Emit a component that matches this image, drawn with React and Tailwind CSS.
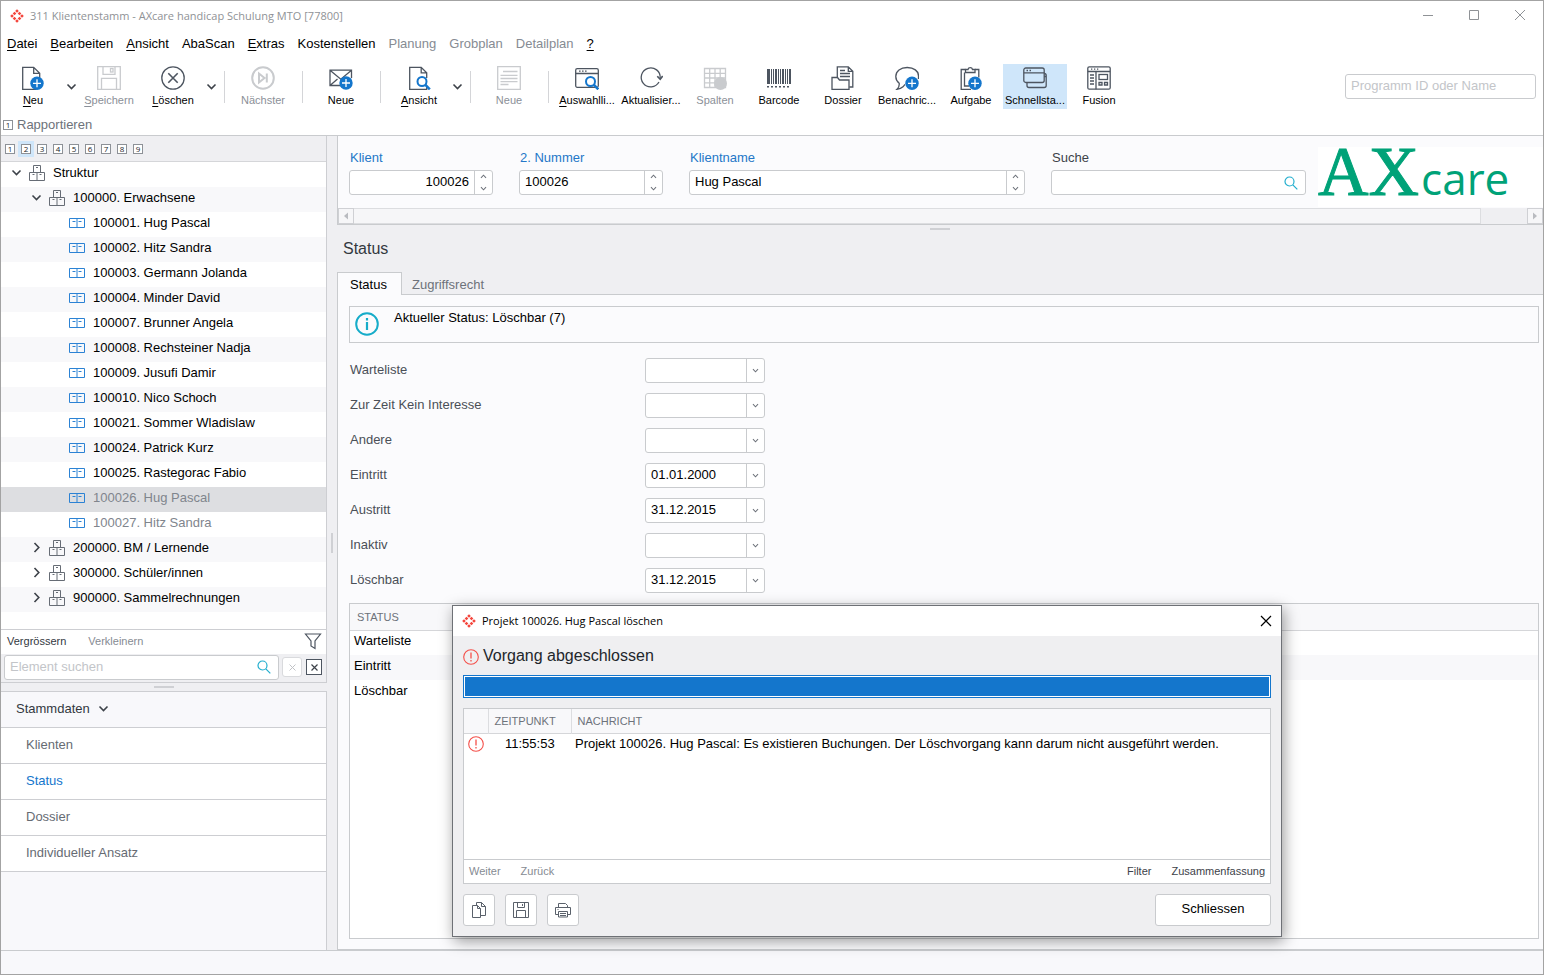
import React from 'react';

const SANS = 'font-["Liberation_Sans",Arial,sans-serif]';
const TITLE = 'font-["Open_Sans","Noto_Sans",sans-serif]';

function Svg({ size = 24, children, className = '', sw = 1.3 }) {
  return (
    <svg
      width={size}
      height={size}
      viewBox={`0 0 ${size} ${size}`}
      fill="none"
      stroke="currentColor"
      strokeWidth={sw}
      className={`shrink-0 ${className}`}
      aria-hidden="true"
    >
      {children}
    </svg>
  );
}

function BrandMark() {
  const dots = [[7, 2], [4.5, 4.5], [9.5, 4.5], [2, 7], [12, 7], [4.5, 9.5], [9.5, 9.5], [7, 12]];
  return (
    <Svg size={14} className="text-[#f4453c]">
      {dots.map(([x, y]) => (
        <rect key={`${x}-${y}`} x={x - 1.3} y={y - 1.3} width="2.6" height="2.6" transform={`rotate(45 ${x} ${y})`} fill="currentColor" stroke="none" />
      ))}
    </Svg>
  );
}

const Plus = ({ x, y, r = 6.7 }) => (
  <g stroke="none">
    <circle cx={x} cy={y} r={r} fill="#1476cc" />
    <path d={`M${x - 4} ${y}h8M${x} ${y - 4}v8`} stroke="#fff" strokeWidth="1.3" />
  </g>
);

const Lens = ({ x, y }) => (
  <g stroke="#1476cc">
    <circle cx={x} cy={y} r="4.5" strokeWidth="2" fill="#fff" />
    <path d={`M${x + 3.2} ${y + 3.2}l4.6 4.6`} strokeWidth="2.6" />
  </g>
);

const Disk = () => (
  <>
    <path d="M.7.7h22.6v22.6H.7zM6 .7v7.6h12V.7M4.5 23.3v-11h15v11" />
    <rect x="13.5" y="2.5" width="2.5" height="3.5" />
  </>
);

const icons = {
  page: (
    <>
      <path d="M15.5 23.3H1.7V1.3h11l6 6V12M12.7 1.3v6h6" />
      <Plus x={16} y={17.3} />
    </>
  ),
  disk: <Disk />,
  cross: (
    <>
      <circle cx="12" cy="12" r="11.2" />
      <path d="M7.3 7.3l9.4 9.4M16.7 7.3l-9.4 9.4" strokeWidth="1.6" />
    </>
  ),
  next: (
    <>
      <circle cx="12" cy="12" r="10.8" strokeWidth="2" />
      <path d="M8 7.5v9l5.5-4.5zM15.8 7.5v9" strokeWidth="2" />
    </>
  ),
  mail: (
    <>
      <path d="M12 19.5H1V4.2h21.5V12M1 4.2l10.8 9 10.7-9M1 19.5l7.500-6.500" />
      <Plus x={17} y={17} />
    </>
  ),
  view: (
    <>
      <path d="M14 23.3H2.7V1.3h11.5l5.5 5.5V12M14.2 1.3v5.5h5.5M19.7 20v3.3H13" />
      <Lens x={15} y={15.5} />
    </>
  ),
  note: <path d="M.7.7h22.6v22.6H.7zM6 5.500h14.500M3.500 9.300h17M3.500 12.500h17M3.500 15.700h17M3.500 18.500h8" />,
  windowLens: (
    <>
      <rect x=".7" y="2.7" width="22.6" height="18.6" rx="1.5" />
      <path d="M.7 7.5h22.6M4 5.2h1.6M7 5.2h1.6M10 5.2h1.6" />
      <Lens x={15.5} y={15.5} />
    </>
  ),
  refresh: (
    <>
      <path d="M20 16a9.500 9.500 0 1 1 1.200-4" />
      <path d="M18.300 10.300l2.900 3 2.500-3.300" strokeWidth="1.600" />
    </>
  ),
  columns: (
    <>
      <path d="M1.5 2.5h21v19h-21zM1.5 7.3h21M1.5 12h21M1.5 16.8h21M6.7 2.5v19M12 2.5v19M17.2 2.5v19" />
      <circle cx="17.5" cy="17.5" r="6.500" fill="currentColor" stroke="none" />
    </>
  ),
  barcode: (
    <g fill="currentColor" stroke="none">
      <path d="M0 3h3v15H0zM4 3h1v15H4zM6 3h1v15H6zM8 3h2v15H8zM11 3h1v15h-1zM13 3h1v15h-1zM15 3h2v15h-2zM18 3h1v15h-1zM20 3h1v15h-1zM22 3h2v15h-2z" />
      <path d="M0 20h2v1.4H0zM4 20h2v1.4H4zM8 20h2v1.4H8zM12 20h2v1.4h-2zM16 20h2v1.4h-2zM20 20h2v1.4h-2z" />
    </g>
  ),
  dossier: (
    <>
      <path d="M6.300 11.500V.8h11l4.500 4.500v15.700h-3.500M17.300.8v4.500h4.500M9 4.500h5M9 7.500h10M9 10.500h10" />
      <path d="M1 23.300V11.500h5.500l2 2.500h9.500v9.300z" />
    </>
  ),
  chat: (
    <>
      <path d="M10 18.300l-2 2.500c-1.500 1.500-3.500 2.300-6 2.500 1.700-1.500 2.500-3.500 2.200-6C2 15.500.8 13 .8 10.500.8 5 5.500 1.500 12.200 1.500S23.500 5 23.500 10v3" />
      <Plus x={17} y={17.300} />
    </>
  ),
  clipboard: (
    <>
      <path d="M6.500 3.500H2.200v19.800H12M16 3.500h3.800v8" />
      <path d="M6.500 6.500h9.500V3.500h-2.500a2.300 2.300 0 0 0-4.500 0H6.500zM5.500 6.500v13.500H10" />
      <Plus x={16} y={17.300} />
    </>
  ),
  windows: (
    <>
      <rect x=".8" y="2" width="20.400" height="14.500" rx="2" />
      <path d="M.8 6.800h20.400M3.500 4.500h1.500M6.500 4.500H8" />
      <path d="M21.200 7.500c1.300 0 2 .8 2 2v10c0 1.300-.7 2-2 2H6c-1.300 0-2-.7-2-2v-3M21.200 10.500h2" />
    </>
  ),
  fusion: (
    <>
      <rect x=".8" y=".8" width="22.400" height="22.400" rx="1.500" />
      <path d="M.8 5.500h22.400M9 5.500v17.700M4 3.200h1.300M7 3.200h1.300M10 3.200h1.300" />
      <path d="M3 9h4M3 12h4M3 15h4M3 18h4" strokeWidth="1.600" />
      <rect x="12" y="8.500" width="8.500" height="5" />
      <path d="M12 16.500h3v2.500h-3zM17.500 16.500h3v2.500h-3z" />
    </>
  ),
};

function Chevron({ dir = 'down', small }) {
  const d = dir === 'down' ? 'M1.500 3.500L5.500 7.500l4-4' : dir === 'up' ? 'M1.500 7.500l4-4 4 4' : 'M3.500 1l4.300 4.500L3.500 10';
  return (
    <svg width={small ? 7 : 11} height={small ? 7 : 11} viewBox="0 0 11 11" fill="none" stroke={small ? '#6d727a' : '#3d4249'} strokeWidth="1.6" className="shrink-0" aria-hidden="true">
      <path d={d} />
    </svg>
  );
}

function Accel({ text, on }) {
  if (!on) return text;
  return (
    <>
      <span className="underline underline-offset-2">{text[0]}</span>
      {text.slice(1)}
    </>
  );
}

function Tool({ icon, label, disabled, active, accel }) {
  return (
    <button
      type="button"
      disabled={disabled}
      className={`flex h-[45px] w-16 shrink-0 flex-col items-center gap-[3px] pt-0.5 text-[11px] leading-[14px] ${active ? 'bg-[#cfe6fa]' : ''}`}
    >
      <Svg className={disabled ? 'text-[#c9cbce]' : 'text-[#4d5560]'}>{icons[icon]}</Svg>
      <span className={`whitespace-nowrap ${disabled ? 'text-[#8b9098]' : 'text-black'}`}>
        <Accel text={label} on={accel} />
      </span>
    </button>
  );
}

const ToolMenu = ({ label }) => (
  <button type="button" aria-label={label} className="flex h-[45px] w-3 shrink-0 items-center justify-center">
    <Chevron />
  </button>
);

const Separator = () => (
  <div className="flex h-[45px] w-3.5 shrink-0 items-center justify-center">
    <div className="h-8 w-px bg-[#d4d5d8]" />
  </div>
);

const menu = [
  ['Datei', true], ['Bearbeiten', true], ['Ansicht', true], ['AbaScan', false], ['Extras', true], ['Kostenstellen', false],
  ['Planung', false, true], ['Grobplan', false, true], ['Detailplan', false, true], ['?', true],
];

const people = [
  '100001. Hug Pascal', '100002. Hitz Sandra', '100003. Germann Jolanda', '100004. Minder David', '100007. Brunner Angela',
  '100008. Rechsteiner Nadja', '100009. Jusufi Damir', '100010. Nico Schoch', '100021. Sommer Wladislaw',
  '100024. Patrick Kurz', '100025. Rastegorac Fabio', '100026. Hug Pascal', '100027. Hitz Sandra',
];

const tree = [
  { level: 0, open: true, text: 'Struktur' },
  { level: 1, open: true, text: '100000. Erwachsene' },
  ...people.map((text, i) => ({ level: 2, text, muted: i > 10, selected: i === 11 })),
  { level: 1, text: '200000. BM / Lernende' },
  { level: 1, text: '300000. Schüler/innen' },
  { level: 1, text: '900000. Sammelrechnungen' },
];

const GroupIcon = () => (
  <Svg size={16} sw={1} className="text-[#666c75]">
    <path d="M4.500 7.500v-7h7v7M.5 7.500h15v8H.5zM8 7.500v8M7 2.500h2M3.500 9.500h2M10.500 9.500h2" />
  </Svg>
);

const PersonIcon = () => (
  <svg width="16" height="10" viewBox="0 0 16 10" fill="none" stroke="#2b82d4" className="shrink-0" aria-hidden="true">
    <path d="M.5.5h15v9H.5zM8 .5v9M3.500 3.500h3M9.500 3.500h3" />
  </svg>
);

function TreeRow({ row, index }) {
  const indent = ['pl-[10px]', 'pl-[30px]', 'pl-[68px]'][row.level];
  const bg = row.selected ? 'bg-[#dddee1]' : index % 2 ? 'bg-[#f8f8fa]' : 'bg-white';
  return (
    <li role="treeitem" aria-selected={!!row.selected} className={`flex h-[25px] items-center gap-2 pb-1 ${indent} ${bg}`}>
      {row.level < 2 ? (
        <>
          <button type="button" aria-label={`${row.text} umschalten`} className="-mr-px">
            <Chevron dir={row.open ? 'down' : 'right'} />
          </button>
          <GroupIcon />
        </>
      ) : (
        <PersonIcon />
      )}
      <span className={row.muted ? 'text-[#80858d]' : 'text-black'}>{row.text}</span>
    </li>
  );
}

function NumberBox({ n, active }) {
  return (
    <button type="button" className={`flex size-4 items-center justify-center ${active ? 'bg-[#cfe6fa]' : ''}`}>
      <span className={`flex size-[10px] items-center justify-center border border-[#8d9197] bg-white text-[8px] leading-none text-[#22262b] ${TITLE}`}>{n}</span>
    </button>
  );
}

const SearchIcon = () => (
  <Svg size={14} sw={1.2} className="text-[#22aece]">
    <circle cx="5.500" cy="5.500" r="4.500" />
    <path d="M8.800 8.800l4.500 4.500" />
  </Svg>
);

const box = 'border border-[#c9cbce] rounded-[3px] bg-white';

function Sidebar() {
  return (
    <aside className="flex w-[326px] shrink-0 flex-col">
      <div className="flex flex-1 flex-col border-r border-[#cdced2]">
        <div className="flex h-[26px] items-center border-b border-[#d5d6d9] pl-px">
          {[1, 2, 3, 4, 5, 6, 7, 8, 9].map((n) => <NumberBox key={n} n={n} active={n === 2} />)}
        </div>
        <ul role="tree" className="flex-1 bg-white pb-4">
          {tree.map((row, i) => <TreeRow key={row.text} row={row} index={i} />)}
        </ul>
        <div className="flex h-[25px] items-center border-t border-[#cdced2] bg-white pb-0.5 pl-1.5 pr-1 text-[11px]">
          <button type="button" className="mr-[22px] text-[#33383f]">Vergrössern</button>
          <button type="button" className="text-[#868b93]">Verkleinern</button>
          <button type="button" aria-label="Filter" className="ml-auto">
            <Svg size={18} sw={1.2} className="text-[#4d5560]">
              <path d="M1.500 2h15l-5.500 7v7.500l-4-2.500V9z" />
            </Svg>
          </button>
        </div>
        <div className="flex h-[29px] items-center gap-[3px] border-b border-[#cdced2] pb-0.5 pl-[3px] pr-1">
          <label className={`flex h-[25px] flex-1 items-center px-[5px] ${box}`}>
            <input aria-label="Element suchen" placeholder="Element suchen" className="min-w-0 flex-1 bg-transparent outline-none placeholder:text-[#c3c5c9]" />
            <span className="pr-0.5"><SearchIcon /></span>
          </label>
          <button type="button" aria-label="Suche leeren" className="flex size-5 items-center justify-center rounded-[3px] border border-[#d9dadd] bg-white">
            <Svg size={7} sw={1} className="text-[#c0c2c6]"><path d="M.5.5l6 6M6.500.5l-6 6" /></Svg>
          </button>
          <button type="button" aria-label="Suche schliessen" className="ml-px flex size-4 items-center justify-center border border-[#4d5560] bg-white">
            <Svg size={7} sw={1.2} className="text-[#3d4249]"><path d="M.5.5l6 6M6.500.5l-6 6" /></Svg>
          </button>
        </div>
      </div>
      <div className="flex h-2 items-center justify-center"><div className="h-0.5 w-5 bg-[#cfd0d4]" /></div>
      <nav className="h-[259px] border-r border-t border-[#cdced2] bg-[#f8f8fb]">
        <button type="button" className="flex h-9 w-full items-center gap-2 border-b border-[#cdced2] pb-0.5 pl-[15px] text-[#33383f]">
          Stammdaten <Chevron />
        </button>
        {['Klienten', 'Status', 'Dossier', 'Individueller Ansatz'].map((t) => (
          <a key={t} href="#" className={`flex h-9 items-center border-b border-[#cdced2] bg-white pb-0.5 pl-[25px] ${t === 'Status' ? 'text-[#1476cc]' : 'text-[#666b73]'}`}>
            {t}
          </a>
        ))}
      </nav>
    </aside>
  );
}

function Spinner({ id, label, value, width, right }) {
  return (
    <div className={`shrink-0 ${width}`}>
      <label htmlFor={id} className="block h-[21px] pl-px pt-px leading-4 text-[#2477c8]">{label}</label>
      <div className={`flex h-[25px] ${box}`}>
        <input id={id} defaultValue={value} className={`min-w-0 flex-1 bg-transparent px-[5px] pb-0.5 text-black outline-none ${right ? 'text-right' : ''}`} />
        <div className="flex w-[18px] flex-col items-center justify-between border-l border-[#c9cbce] py-0.5">
          <button type="button" aria-label={`${label} vorheriger`}><Chevron dir="up" small /></button>
          <button type="button" aria-label={`${label} nächster`}><Chevron small /></button>
        </div>
      </div>
    </div>
  );
}

function ScrollArrow({ left }) {
  return (
    <button type="button" aria-label={left ? 'Nach links' : 'Nach rechts'} className="flex w-4 items-center justify-center border border-[#cfd0d4] bg-[#f6f6f8]">
      <Svg size={8} className="text-[#b9bbc0]">
        <path d={left ? 'M6 0.500v7l-4-3.500z' : 'M2 0.500v7l4-3.500z'} fill="currentColor" stroke="none" />
      </Svg>
    </button>
  );
}

function ClientHeader() {
  return (
    <section className="border-b border-l border-[#c9cbce] bg-[#fbfbfd]">
      <div className="flex h-[72px] items-start gap-[26px] pl-[11px] pt-[13px]">
        <Spinner id="klient" label="Klient" value="100026" width="w-36" right />
        <Spinner id="nummer" label="2. Nummer" value="100026" width="w-36" />
        <Spinner id="name" label="Klientname" value="Hug Pascal" width="w-[336px]" />
        <div className="flex flex-1">
          <div className="w-[255px] shrink-0">
            <label htmlFor="suche" className="block h-[21px] pl-px pt-px leading-4 text-[#3d4249]">Suche</label>
            <div className={`flex h-[25px] items-center pr-[7px] ${box}`}>
              <input id="suche" className="min-w-0 flex-1 bg-transparent px-1.5 outline-none" />
              <SearchIcon />
            </div>
          </div>
          <div className="-mt-0.5 ml-3 flex h-[60px] flex-1 items-baseline bg-white text-[#00a278]">
            <span className='font-["Liberation_Serif",serif] text-[70px] leading-[50px] [-webkit-text-stroke:1px_#00a278]'>AX</span>
            <span className='pl-0.5 font-["Open_Sans",sans-serif] text-[44px] leading-[50px]'>care</span>
          </div>
        </div>
      </div>
      <div className="flex h-4 bg-[#efeff2]">
        <ScrollArrow left />
        <div className="flex-1 border border-l-0 border-[#dcdde0] bg-[#f6f6f8]" />
        <div className="w-[46px]" />
        <ScrollArrow />
      </div>
    </section>
  );
}

const fields = [
  ['Warteliste', ''], ['Zur Zeit Kein Interesse', ''], ['Andere', ''], ['Eintritt', '01.01.2000'],
  ['Austritt', '31.12.2015'], ['Inaktiv', ''], ['Löschbar', '31.12.2015'],
];

function StatusPanel() {
  return (
    <section className="flex flex-1 flex-col">
      <div className="flex h-[47px] flex-col">
        <div className="mx-auto mt-[3px] h-0.5 w-5 bg-[#cfd0d4]" />
        <h1 className="pl-1.5 pt-2 text-[16px] leading-[22px] text-[#33383f]">Status</h1>
      </div>
      <div className="flex h-[23px]" role="tablist">
        <button type="button" role="tab" aria-selected="true" className="w-[65px] border border-b-0 border-[#c9cbce] bg-[#fbfbfd] pr-0.5 pt-px text-black">Status</button>
        <div className="flex-1 border-b border-[#c9cbce]">
          <button type="button" role="tab" aria-selected="false" className="h-[23px] pl-2.5 pt-0.5 text-[#6d727a]">Zugriffsrecht</button>
        </div>
      </div>
      <div className="flex flex-1 flex-col border-b border-l border-[#c9cbce] bg-[#fbfbfd] pb-2.5 pl-[11px] pr-1 pt-[11px]">
        <div className="flex h-[37px] items-start gap-[15px] border border-[#c9cbce] pl-[5px] pt-[5px] text-black">
          <Svg size={24} sw={2} className="text-[#16acc9]">
            <circle cx="12" cy="12" r="10.800" />
            <path d="M12 10v8M12 6v2.500" strokeWidth="2.200" />
          </Svg>
          <span className="leading-3">Aktueller Status: Löschbar (7)</span>
        </div>
        <form className="mt-[15px] flex flex-col gap-2.5">
          {fields.map(([label, value]) => {
            const id = `feld-${label.replace(/ /g, '-')}`;
            return (
              <div key={label} className="flex h-[25px] items-center">
                <label htmlFor={id} className="w-[296px] pb-0.5 pl-px text-[#4a4f57]">{label}</label>
                <div className={`flex h-[25px] w-[120px] ${box}`}>
                  <input id={id} defaultValue={value} className="min-w-0 flex-1 bg-transparent px-[5px] pb-px text-black outline-none" />
                  <button type="button" aria-label={`${label} Kalender`} className="flex w-[18px] items-center justify-center border-l border-[#c9cbce]">
                    <Chevron small />
                  </button>
                </div>
              </div>
            );
          })}
        </form>
        <div className="mt-2.5 flex-1 border border-[#c9cbce] bg-white">
          <table className="w-full border-collapse text-left">
            <thead>
              <tr className="h-[26px] border-b border-[#d5d6d9] bg-[#f8f8fa]">
                <th className="pl-[7px] text-[11px] font-normal text-[#6d727a]">STATUS</th>
              </tr>
            </thead>
            <tbody>
              {['Warteliste', 'Eintritt', 'Löschbar'].map((t) => (
                <tr key={t} className="h-[25px] text-black even:bg-[#f8f8fa]"><td className="pb-1 pl-1">{t}</td></tr>
              ))}
            </tbody>
          </table>
        </div>
      </div>
    </section>
  );
}

const Alert = () => (
  <Svg size={16} sw={1.1} className="text-[#f4504a]">
    <circle cx="8" cy="8" r="7.300" />
    <path d="M8 3.500v6M8 11v1.500" strokeWidth="1.300" />
  </Svg>
);

function SquareButton({ label, children }) {
  return (
    <button type="button" aria-label={label} className={`flex size-8 items-center justify-center text-[#5a616b] ${box}`}>{children}</button>
  );
}

function DeleteDialog() {
  return (
    <div role="dialog" aria-label="Projekt 100026. Hug Pascal löschen" className="absolute left-[451px] top-[604px] flex h-[332px] w-[830px] flex-col border border-[#6e7176] bg-[#efeff1] shadow-[2px_4px_14px_rgba(0,0,0,0.4)]">
      <header className="flex h-[30px] items-center gap-1.5 bg-white px-[9px] text-black">
        <BrandMark />
        <span className={`text-[11px] ${TITLE}`}>Projekt 100026. Hug Pascal löschen</span>
        <button type="button" aria-label="Dialog schliessen" className="ml-auto">
          <Svg size={12} sw={1.2}><path d="M1 1l10 10M11 1L1 11" /></Svg>
        </button>
      </header>
      <div className="flex flex-1 flex-col px-2.5 pb-2.5">
        <div className="flex h-[39px] items-center gap-1 pt-0.5 text-[16px] text-[#22262b]">
          <Alert />
          <span className="pb-0.5">Vorgang abgeschlossen</span>
        </div>
        <div role="progressbar" aria-label="Fortschritt" aria-valuenow={100} className="h-[23px] border border-[#1476cc] bg-white p-px">
          <div className="h-full bg-[#1476cc]" />
        </div>
        <div className="mt-2.5 flex flex-1 flex-col border border-[#c9cbce] bg-white">
          <table className="w-full table-fixed border-collapse text-left">
            <colgroup><col className="w-6" /><col className="w-[83px]" /><col /></colgroup>
            <thead>
              <tr className="h-6 border-b border-[#d5d6d9] bg-[#f8f8fa] text-[11px] text-[#6d727a]">
                <th />
                <th className="border-l border-[#dcdde0] pl-1.5 font-normal">ZEITPUNKT</th>
                <th className="border-l border-[#dcdde0] pl-1.5 font-normal">NACHRICHT</th>
              </tr>
            </thead>
            <tbody>
              <tr className="h-[25px] text-black">
                <td className="pb-1 pl-1"><Alert /></td>
                <td className="pb-1 pl-[17px]">11:55:53</td>
                <td className="pb-1 pl-1">Projekt 100026. Hug Pascal: Es existieren Buchungen. Der Löschvorgang kann darum nicht ausgeführt werden.</td>
              </tr>
            </tbody>
          </table>
          <div className="mt-auto flex h-6 items-center gap-5 border-t border-[#c9cbce] px-[5px] pb-0.5 text-[11px] text-[#3d4249]">
            <button type="button" disabled className="text-[#868b93]">Weiter</button>
            <button type="button" disabled className="text-[#868b93]">Zurück</button>
            <button type="button" className="ml-auto">Filter</button>
            <button type="button">Zusammenfassung</button>
          </div>
        </div>
        <footer className="mt-2.5 flex gap-2.5">
          <SquareButton label="Kopieren">
            <Svg size={16} sw={1}>
              <path d="M1.500 3.500h5l3 3v9h-8zM6.500 3.500v3h3M5.500 3.500v-3h5l4 4v9h-5M10.500.5v4h4" />
            </Svg>
          </SquareButton>
          <SquareButton label="Speichern">
            <Svg size={16} sw={1}><path d="M.5.5h15v15H.5zM4.500.5v5h7v-5M9.500 2v2M3.500 15.500v-7h9v7" /></Svg>
          </SquareButton>
          <SquareButton label="Drucken">
            <Svg size={16} sw={1}>
              <path d="M3.500 5.500v-4h7l2 2v2M3.500 12.500h-3v-7h15v7h-3M3.500 9.500h9v5.500h-9zM5 11.500h6M5 13.500h6M2.500 7.500h1" />
            </Svg>
          </SquareButton>
          <button type="button" className={`ml-auto h-8 w-[116px] pb-0.5 text-black ${box}`}>Schliessen</button>
        </footer>
      </div>
    </div>
  );
}

export default function App() {
  return (
    <div className={`relative flex min-h-screen flex-col border border-[#a3a3a3] bg-[#efeff2] text-[13px] leading-4 ${SANS}`}>
      <div className="border-b border-[#c9cbce] bg-white">
        <header className="flex h-[30px] items-center gap-1.5 pl-[9px] pr-[17px] text-[#8f9296]">
          <BrandMark />
          <span className={`text-[11px] ${TITLE}`}>311 Klientenstamm - AXcare handicap Schulung MTO [77800]</span>
          <div className="ml-auto flex gap-[34px]">
            <button type="button" aria-label="Minimieren"><Svg size={12} sw={1}><path d="M1 5.500h10" /></Svg></button>
            <button type="button" aria-label="Maximieren"><Svg size={12} sw={1}><path d="M1.500.5h9v9h-9z" /></Svg></button>
            <button type="button" aria-label="Schliessen"><Svg size={12} sw={1}><path d="M1 0l10 10M11 0L1 10" /></Svg></button>
          </div>
        </header>
        <nav className="flex h-[26px] items-center gap-[13px] pl-1.5">
          {menu.map(([t, accel, off]) => (
            <button key={t} type="button" disabled={off} className={off ? 'text-[#868b93]' : 'text-black'}><Accel text={t} on={accel} /></button>
          ))}
        </nav>
        <div className="flex items-start pr-[7px] pt-[7px]">
          <Tool icon="page" label="Neu" accel />
          <ToolMenu label="Neu Optionen" />
          <Tool icon="disk" label="Speichern" disabled accel />
          <Tool icon="cross" label="Löschen" accel />
          <ToolMenu label="Löschen Optionen" />
          <Separator />
          <Tool icon="next" label="Nächster" disabled />
          <Separator />
          <Tool icon="mail" label="Neue" />
          <Separator />
          <Tool icon="view" label="Ansicht" accel />
          <ToolMenu label="Ansicht Optionen" />
          <Separator />
          <Tool icon="note" label="Neue" disabled />
          <Separator />
          <Tool icon="windowLens" label="Auswahlli..." accel />
          <Tool icon="refresh" label="Aktualisier..." />
          <Tool icon="columns" label="Spalten" disabled />
          <Tool icon="barcode" label="Barcode" />
          <Tool icon="dossier" label="Dossier" />
          <Tool icon="chat" label="Benachric..." />
          <Tool icon="clipboard" label="Aufgabe" />
          <Tool icon="windows" label="Schnellsta..." active />
          <Tool icon="fusion" label="Fusion" />
          <input aria-label="Programm ID oder Name" placeholder="Programm ID oder Name" className={`ml-auto mt-2.5 h-[25px] w-[191px] px-[5px] pb-0.5 outline-none placeholder:text-[#c3c5c9] ${box}`} />
        </div>
        <div className="flex h-[26px] items-end gap-1 pb-0.5 pl-0.5 text-[#6d727a]">
          <span className={`mb-[3px] flex size-[10px] items-center justify-center border border-[#8d9197] text-[8px] leading-none text-[#22262b] ${TITLE}`}>1</span>
          <a href="#">Rapportieren</a>
        </div>
      </div>
      <div className="flex flex-1">
        <Sidebar />
        <div className="flex w-2.5 items-center justify-center"><div className="h-5 w-0.5 bg-[#cfd0d4]" /></div>
        <main className="flex min-w-0 flex-1 flex-col">
          <ClientHeader />
          <StatusPanel />
        </main>
      </div>
      <footer className="h-6 border-t border-[#c9cbce] bg-[#f8f8fb]" />
      <DeleteDialog />
    </div>
  );
}
